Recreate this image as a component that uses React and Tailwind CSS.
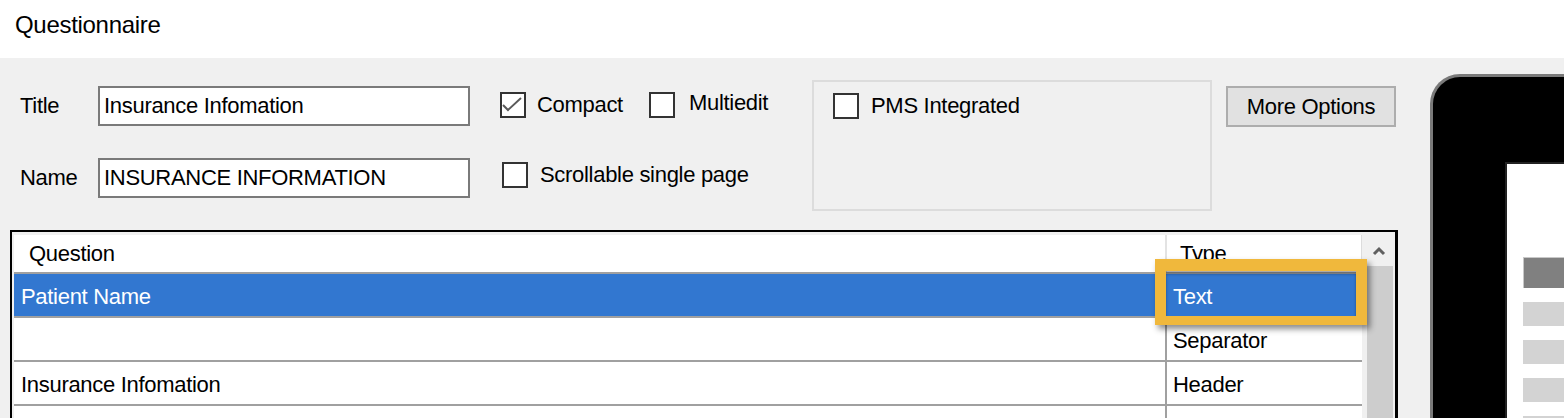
import React from "react";

const Check = ({ checked }) => (
  <div className="w-[26px] h-[26px] shrink-0 border-2 border-[#333333] bg-white">
    {checked && (
      <svg width="22" height="22" viewBox="0 0 22 22">
        <polyline points="1,11 6,16 19,4" fill="none" stroke="#5a5a5a" strokeWidth="2" />
      </svg>
    )}
  </div>
);

const Field = ({ label, value }) => (
  <div className="flex items-center h-[40px]">
    <span className="w-[78px]">{label}</span>
    <div className="w-[372px] h-full border-2 border-[#7a7a7a] bg-white pl-[4px] flex items-center">
      {value}
    </div>
  </div>
);

const rows = [
  { q: "Patient Name", t: "Text", selected: true },
  { q: "", t: "Separator" },
  { q: "Insurance Infomation", t: "Header" },
  { q: "", t: "" },
];

const App = () => {
  return (
    <div className="w-[1564px] h-[418px] overflow-hidden bg-[#f0f0f0] text-black text-[22px] leading-[26px] tracking-[-0.3px] font-['Liberation_Sans',Arial,sans-serif]">
      <div className="h-[58px] bg-white pl-[15px] pt-[10px] text-[24px] leading-[30px]">
        Questionnaire
      </div>

      <div className="flex">
        <div className="w-[1400px] shrink-0">
          {/* form */}
          <div className="flex h-[172px]">
            <div className="w-[470px] shrink-0 pl-[20px] pt-[28px] flex flex-col gap-[32px]">
              <Field label="Title" value="Insurance Infomation" />
              <Field label="Name" value="INSURANCE INFORMATION" />
            </div>

            <div className="w-[342px] shrink-0 pl-[30px] pt-[34px]">
              <div className="flex items-center h-[26px]">
                <Check checked />
                <span className="ml-[11px]">Compact</span>
                <div className="ml-[26px]">
                  <Check />
                </div>
                <span className="ml-[14px] -mt-[4px]">Multiedit</span>
              </div>
              <div className="flex items-center h-[26px] mt-[44px] ml-[2px]">
                <Check />
                <span className="ml-[12px]">Scrollable single page</span>
              </div>
            </div>

            <div className="w-[400px] h-[131px] mt-[22px] shrink-0 border-2 border-[#dcdcdc] pl-[19px] pt-[11px]">
              <div className="flex items-center h-[26px]">
                <Check />
                <span className="ml-[12px]">PMS Integrated</span>
              </div>
            </div>

            <button className="ml-[14px] mt-[28px] w-[170px] h-[41px] shrink-0 bg-[#e1e1e1] border-2 border-[#adadad] flex items-center justify-center">
              More Options
            </button>
          </div>

          {/* question table */}
          <div className="relative ml-[10px] w-[1388px] h-[200px] border-t-2 border-l-2 border-r-[3px] border-black bg-[#f0f0f0] pt-[3px] pl-[2px] flex">
            <div className="w-[1348px] shrink-0">
              <div className="flex h-[39px] bg-white border-b-2 border-[#a0a0a0]">
                <div className="w-[1151px] pl-[15px] flex items-center">Question</div>
                <div className="w-[2px] bg-[#e3e3e3]" />
                <div className="w-[195px] pl-[13px] flex items-center border-r border-[#dcdcdc]">Type</div>
              </div>
              {rows.map((r, i) => (
                <div
                  key={i}
                  className={
                    r.selected
                      ? "flex h-[44px] bg-[#3277d0] text-white border-b-2 border-[#a0a0a0]"
                      : "flex h-[44px] bg-white border-b-2 border-[#a0a0a0]"
                  }
                >
                  <div className="w-[1151px] pl-[7px] pt-[3px] flex items-center">{r.q}</div>
                  <div className={r.selected ? "w-[2px]" : "w-[2px] bg-[#a0a0a0]"} />
                  <div className="w-[195px] pl-[6px] pt-[3px] flex items-center">{r.t}</div>
                </div>
              ))}
            </div>

            {/* scrollbar */}
            <div className="w-[33px] shrink-0 flex flex-col">
              <div className="h-[31px] flex items-center justify-center">
                <svg width="14" height="10" viewBox="0 0 14 10">
                  <polyline points="2,8 7,3 12,8" fill="none" stroke="#606060" strokeWidth="3" />
                </svg>
              </div>
              <div className="flex-1 ml-[5px] mr-[2px] bg-[#cdcdcd]" />
            </div>

            {/* highlight callout */}
            <div className="absolute left-[1143px] top-[27px] w-[212px] h-[66px] border-t-[12px] border-x-[11px] border-b-[9px] border-[#f0b83c] shadow-[3px_4px_6px_rgba(0,0,0,0.45),inset_0_3px_3px_rgba(0,0,0,0.35)]" />
          </div>
        </div>

        {/* device preview */}
        <div className="ml-[30px] mt-[16px] w-[300px] h-[400px] shrink-0 bg-black rounded-tl-[30px] border-t-[3px] border-l-[3px] border-[#7a7a7a] pl-[72px] pt-[85px]">
          <div className="h-full bg-white border-t-2 border-l-2 border-[#222222] pl-[16px] pt-[93px]">
            <div className="h-[31px] bg-[#808080] border-t border-l border-[#c8c8c8]" />
            <div className="h-[24px] mt-[14px] bg-[#d3d3d3]" />
            <div className="h-[24px] mt-[14px] bg-[#d3d3d3]" />
            <div className="h-[24px] mt-[14px] bg-[#d3d3d3]" />
            <div className="h-[24px] mt-[14px] bg-[#d3d3d3]" />
          </div>
        </div>
      </div>
    </div>
  );
};

export default App;
